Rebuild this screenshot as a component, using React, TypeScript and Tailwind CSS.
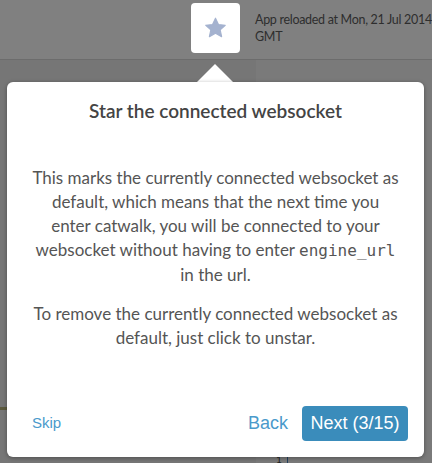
import React from "react";

export default function App() {
  return (
    <div className="relative w-[432px] h-[463px] overflow-hidden bg-[#777777]" style={{ fontFamily: "Lato, 'Noto Sans', sans-serif" }}>
      {/* top bar */}
      <div className="flex h-[60px] bg-[#808080] border-b border-[#6c6c6c]">
        <div className="shrink-0 ml-[191px] mt-[3px] w-[49px] h-[50px] bg-white rounded-[4px] flex items-center justify-center">
          <svg width="23" height="22" viewBox="0 0 24 23">
            <path d="M12 1.2l3.1 6.6 7.1.8-5.3 4.9 1.5 7.1L12 17l-6.4 3.6 1.5-7.1L1.8 8.6l7.1-.8z" fill="#a4b2cf" stroke="#a4b2cf" strokeWidth="1.2" strokeLinejoin="round" />
          </svg>
        </div>
        <div className="shrink-0 ml-[15px] mt-[11px] text-[12.5px] leading-[17px] tracking-[-0.3px] text-[#2e2e2e] whitespace-nowrap">
          <div>App reloaded at Mon, 21 Jul 2014</div>
          <div>GMT</div>
        </div>
      </div>
      {/* below area */}
      <div className="flex h-[403px]">
        <div className="w-[256px] bg-[#767676] relative">
          <div className="absolute left-0 top-[347px] w-[8px] h-[3px] bg-[#5c5a3e]" />
        </div>
        <div className="flex-1 bg-[#7a7a7a] relative">
          <div className="absolute left-[20px] top-[393px] text-[10px] leading-[12px] text-[#222]">1</div>
          <div className="absolute left-[31px] top-[396px] w-[1px] h-[10px] bg-[#23405e]" />
        </div>
      </div>

      {/* arrow */}
      <div className="absolute left-[197px] top-[64px] w-0 h-0 border-l-[18px] border-r-[18px] border-b-[18px] border-l-transparent border-r-transparent border-b-white" />
      {/* card */}
      <div className="absolute left-[7px] top-[82px] w-[417px] h-[375px] bg-white rounded-[6px] shadow-[0_1px_4px_rgba(0,0,0,0.35)] flex flex-col">
        <div className="pt-[17px] text-center text-[19px] leading-[24px] font-semibold text-[#444444]">
          Star the connected websocket
        </div>
        <div className="mt-[43px] px-[10px] text-center text-[17px] leading-[24px] text-[#555555] whitespace-nowrap">
          <p>
            This marks the currently connected websocket as
            <br />
            default, which means that the next time you
            <br />
            enter catwalk, you will be connected to your
            <br />
            websocket without having to enter{" "}
            <span style={{ fontFamily: "'DejaVu Sans Mono', monospace" }} className="text-[16px]">engine_url</span>
            <br />
            in the url.
          </p>
          <p className="mt-[15px]">
            To remove the currently connected websocket as
            <br />
            default, just click to unstar.
          </p>
        </div>
        <div className="mt-auto mb-[16px] flex items-center pl-[25px] pr-[16px]" style={{ fontFamily: "'Liberation Sans', Arial, sans-serif" }}>
          <span className="text-[15px] text-[#4a9acb]">Skip</span>
          <span className="ml-auto text-[18px] text-[#4a9acb]">Back</span>
          <button className="ml-[14px] w-[106px] h-[35px] rounded-[4px] bg-[#3a8cbb] text-white text-[18px]">
            Next (3/15)
          </button>
        </div>
      </div>
    </div>
  );
}
